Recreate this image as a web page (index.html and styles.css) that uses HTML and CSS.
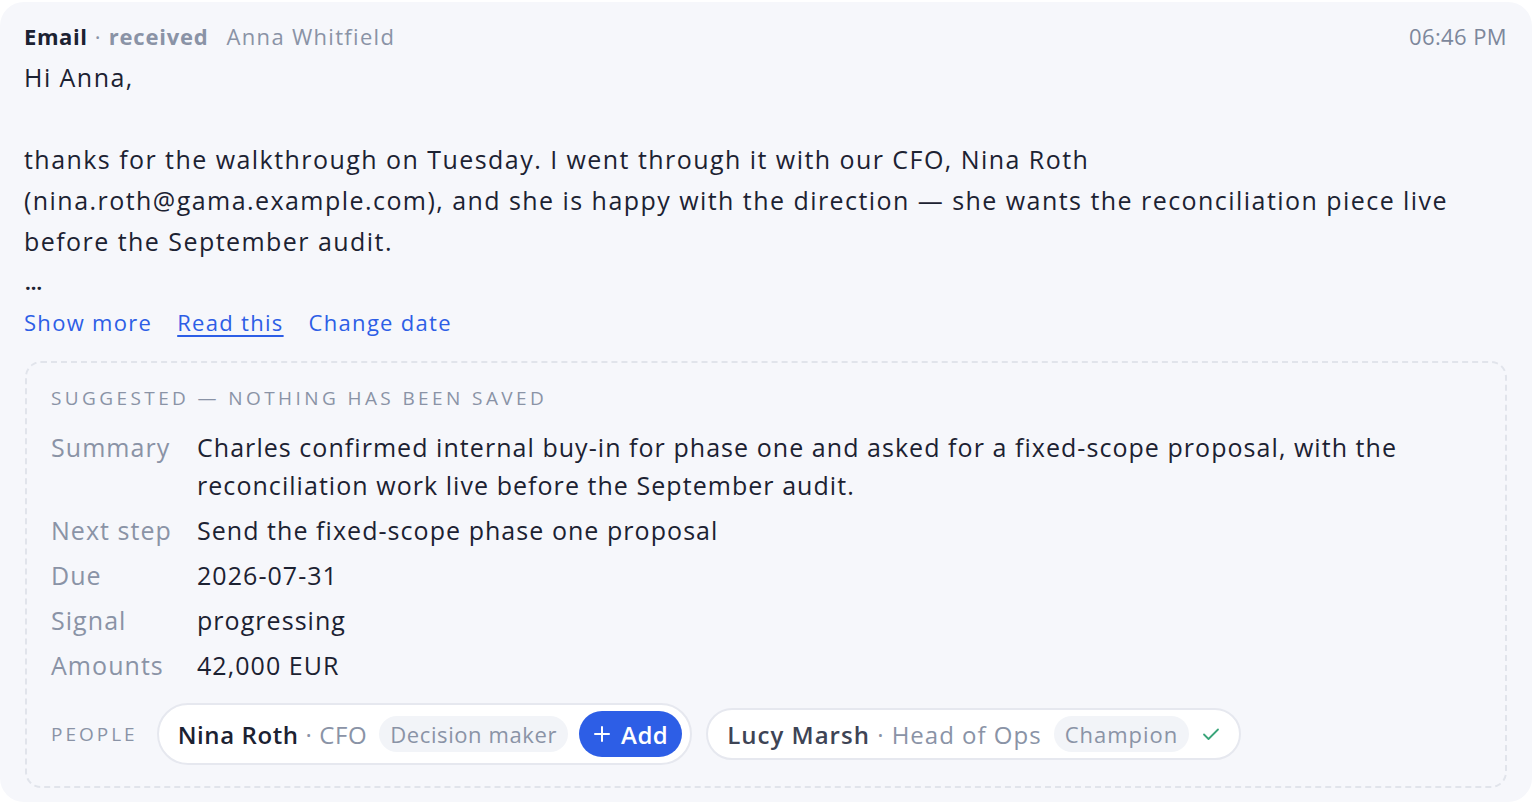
FILE: index.html
```html
<!DOCTYPE html>
<html>
<head>
<meta charset="utf-8">
<link rel="stylesheet" href="styles.css">
</head>
<body>
<div class="card">
  <div class="head">
    <div class="meta"><span class="kind">Email</span><span class="dot"> · </span><span class="dir">received</span><span class="from">Anna Whitfield</span></div>
    <div class="time">06:46 PM</div>
  </div>
  <div class="msg">
    <p>Hi Anna,</p>
    <p class="blank">&nbsp;</p>
    <p>thanks for the walkthrough on Tuesday. I went through it with our CFO, Nina Roth (nina.roth@gama.example.com), and she is happy with the direction — she wants the reconciliation piece live before the September audit.</p>
    <p class="ell">…</p>
  </div>
  <div class="links">
    <a class="lnk">Show more</a>
    <a class="lnk u">Read this</a>
    <a class="lnk">Change date</a>
  </div>
  <div class="suggest">
    <div class="stitle">SUGGESTED — NOTHING HAS BEEN SAVED</div>
    <div class="fields">
      <div class="lab">Summary</div><div class="val">Charles confirmed internal buy-in for phase one and asked for a fixed-scope proposal, with the reconciliation work live before the September audit.</div>
      <div class="lab">Next step</div><div class="val">Send the fixed-scope phase one proposal</div>
      <div class="lab">Due</div><div class="val">2026-07-31</div>
      <div class="lab">Signal</div><div class="val">progressing</div>
      <div class="lab">Amounts</div><div class="val">42,000 EUR</div>
    </div>
    <div class="people">
      <div class="plab">PEOPLE</div>
      <div class="chip big">
        <span class="pname">Nina Roth</span><span class="prole"> · CFO</span>
        <span class="tag">Decision maker</span>
        <button class="add"><svg width="18" height="18" viewBox="0 0 18 18"><path d="M9 2v14M2 9h14" stroke="#fff" stroke-width="2" stroke-linecap="round"/></svg>Add</button>
      </div>
      <div class="chip">
        <span class="pname soft">Lucy Marsh</span><span class="prole"> · Head of Ops</span>
        <span class="tag">Champion</span>
        <svg class="check" width="20" height="20" viewBox="0 0 20 20"><path d="M3 10.5l4.5 4.5L17 5.5" fill="none" stroke="#3aa57a" stroke-width="1.8" stroke-linecap="round" stroke-linejoin="round"/></svg>
      </div>
    </div>
  </div>
</div>
</body>
</html>
```

FILE: styles.css
```css
* { box-sizing: border-box; }
html, body { margin: 0; padding: 0; background: #ffffff; }
body { font-family: "Open Sans", "Liberation Sans", sans-serif; color: #1c2232; }
.card {
  width: 1532px;
  margin: 2px 0 0 0;
  height: 800px;
  background: #f6f7fb;
  border-radius: 24px;
  padding: 18px 25px 0 24px;
}
.head { display: flex; justify-content: space-between; align-items: baseline; font-size: 22px; line-height: 32px; letter-spacing: 1.3px; }
.kind { font-weight: 700; color: #1c2232; letter-spacing: 0.6px; }
.dot { color: #8a93a6; }
.dir { color: #8a93a6; font-weight: 700; letter-spacing: 0.8px; }
.from { color: #8a93a6; margin-left: 18px; }
.time { color: #7d879b; letter-spacing: 0.4px; }
.msg { font-size: 25px; line-height: 41px; margin-top: 5px; letter-spacing: 1.45px; }
.msg p { margin: 0; }
.msg .ell { font-size: 20px; letter-spacing: 0; font-weight: 700; padding-left: 1px; }
.links { display: flex; gap: 25px; font-size: 22px; line-height: 34px; margin-top: 2px; letter-spacing: 1.3px; }
.lnk { color: #2d5ee6; cursor: pointer; }
.lnk.u { text-decoration: underline; text-underline-offset: 4px; text-decoration-thickness: 2px; }
.suggest {
  margin-top: 22px;
  margin-left: 1px;
  border: 2px dashed #e1e4eb;
  border-radius: 16px;
  padding: 20px 24px 21px 24px;
}
.stitle { font-size: 19px; letter-spacing: 3.4px; color: #8a93a6; line-height: 30px; }
.fields {
  display: grid;
  grid-template-columns: 146px 1fr;
  font-size: 25px;
  line-height: 38px;
  row-gap: 7px;
  margin-top: 15px;
  letter-spacing: 1.05px;
}
.lab { color: #8a93a6; }
.val { color: #1c2232; }
.people { display: flex; align-items: center; gap: 14px; margin-top: 19px; }
.plab { font-size: 19px; letter-spacing: 3px; color: #8a93a6; margin-right: 5px; }
.chip {
  display: flex; align-items: center;
  background: #ffffff;
  border: 2px solid #e6e8ef;
  border-radius: 30px;
  height: 52px;
  padding: 0 18px 0 19px;
  font-size: 24px;
  letter-spacing: 1px;
}
.chip.big { height: 62px; padding: 0 8px 0 19px; border-radius: 32px; letter-spacing: 0.6px; }
.pname { font-weight: 600; color: #1c2232; }
.pname.soft { color: #3e4455; }
.prole { color: #8a93a6; white-space: pre; }
.tag {
  background: #f2f4f8; color: #8a93a6;
  border-radius: 18px; padding: 0 11px; margin-left: 12px;
  font-size: 22px; line-height: 36px;
}
.add {
  display: flex; align-items: center; gap: 10px;
  background: #2d5ee6; color: #fff; border: none;
  border-radius: 24px; height: 46px; padding: 0 14px 0 14px;
  font-family: inherit; font-size: 24px; font-weight: 600; margin-left: 11px; letter-spacing: 0.5px;
}
.check { margin-left: 12px; }
```
